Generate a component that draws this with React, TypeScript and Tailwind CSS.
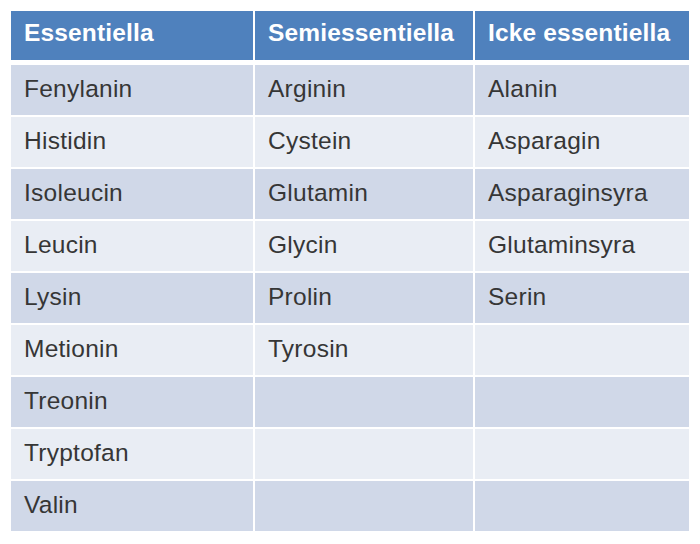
import React from "react";

const rows: [string, string, string][] = [
  ["Fenylanin", "Arginin", "Alanin"],
  ["Histidin", "Cystein", "Asparagin"],
  ["Isoleucin", "Glutamin", "Asparaginsyra"],
  ["Leucin", "Glycin", "Glutaminsyra"],
  ["Lysin", "Prolin", "Serin"],
  ["Metionin", "Tyrosin", ""],
  ["Treonin", "", ""],
  ["Tryptofan", "", ""],
  ["Valin", "", ""],
];

export default function App() {
  return (
    <div
      className="w-[700px] h-[544px] bg-white pt-[11px] pl-[11px]"
      style={{ fontFamily: '"Liberation Sans", Arial, sans-serif' }}
    >
      <div className="w-[678px] grid grid-cols-[242px_218px_214px] gap-x-[2px]">
        {["Essentiella", "Semiessentiella", "Icke essentiella"].map((h) => (
          <div
            key={h}
            className="h-[49px] bg-[#4f81bd] text-white font-bold text-[24.5px] tracking-[0.15px] leading-none flex items-center pl-[13px] pb-[5px]"
          >
            {h}
          </div>
        ))}
        <div className="col-span-3 h-[5px]" />
        {rows.map((r, i) => (
          <React.Fragment key={i}>
            {r.map((c, j) => (
              <div
                key={j}
                className={`h-[50px] ${i % 2 === 0 ? "bg-[#d0d8e8]" : "bg-[#e9edf4]"} ${i < rows.length - 1 ? "mb-[2px]" : ""} text-[#363636] text-[24.5px] tracking-[0.25px] leading-none flex items-center pl-[13px] pb-[1px]`}
              >
                {c}
              </div>
            ))}
          </React.Fragment>
        ))}
      </div>
    </div>
  );
}
